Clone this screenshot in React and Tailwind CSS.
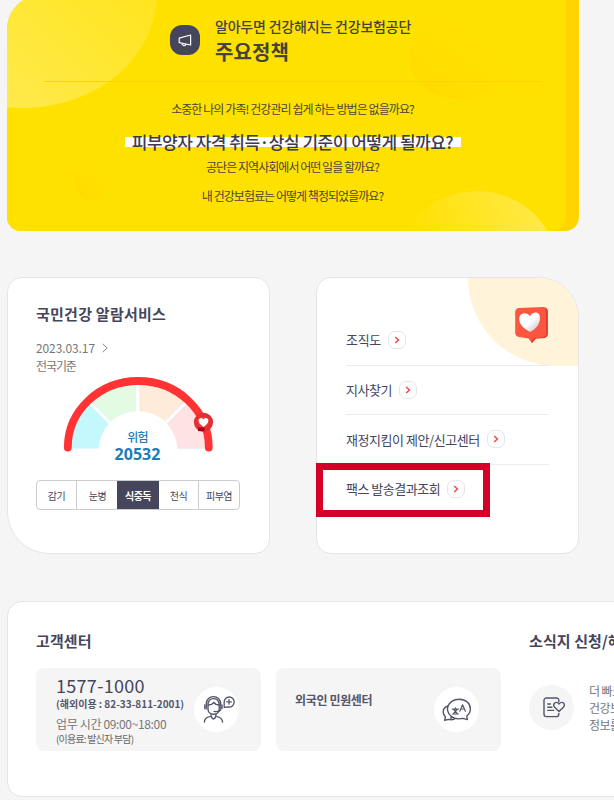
import React from "react";

const questionBase = "relative whitespace-nowrap text-[12px] leading-[16px] text-[#4a4636]";

function ArrowBadge() {
  return (
    <span className="flex h-[18px] w-[18px] items-center justify-center rounded-[7px] border border-[#e6e6e6] bg-white">
      <svg width="6" height="8" viewBox="0 0 6 8" fill="none" stroke="#f04a43" strokeWidth="1.5">
        <path d="M1.2 1 L4.4 4 L1.2 7" />
      </svg>
    </span>
  );
}

function Banner() {
  return (
    <section className="relative h-[231px] w-[572px] overflow-hidden rounded-b-[14px] bg-[#ffd400]">
      <svg className="absolute left-0 top-0" width="572" height="231" viewBox="0 0 572 231">
        <defs>
          <linearGradient id="glowA" x1="0.1" y1="1" x2="0.9" y2="0.3">
            <stop offset="0" stopColor="#fff" stopOpacity="0.36" />
            <stop offset="1" stopColor="#fff" stopOpacity="0.1" />
          </linearGradient>
          <linearGradient id="glowB" x1="0.9" y1="0.2" x2="0.15" y2="0.45">
            <stop offset="0" stopColor="#fff" stopOpacity="0.27" />
            <stop offset="1" stopColor="#fff" stopOpacity="0" />
          </linearGradient>
          <linearGradient id="shade" x1="0.2" y1="0.9" x2="0.75" y2="0.25">
            <stop offset="0" stopColor="#ffd400" stopOpacity="0.42" />
            <stop offset="0.9" stopColor="#ffd400" stopOpacity="0" />
          </linearGradient>
          <clipPath id="sheet">
            <path d="M0 30 A36 36 0 0 1 36 -6 H559 V217 A14 14 0 0 1 545 231 H0 Z" />
          </clipPath>
        </defs>
        <path d="M0 0 H17 Q0 10 0 31 Z" fill="#f5f5f5" />
        <g clipPath="url(#sheet)">
          <rect x="0" y="-6" width="559" height="237" fill="#ffe100" />
          <ellipse cx="16" cy="-6" rx="134" ry="114" fill="url(#glowA)" />
          <ellipse cx="451" cy="57" rx="49" ry="42" fill="url(#shade)" />
          <circle cx="86" cy="181" r="19" fill="url(#shade)" />
          <circle cx="470" cy="273" r="82" fill="url(#glowB)" />
        </g>
      </svg>
      <div className="relative flex h-full w-[559px] flex-col">
        <div className="flex h-[81px] items-start pl-[163px]">
          <div className="mt-[25px] flex h-[30px] w-[30px] items-center justify-center rounded-[12px] bg-[#45465b]">
            <svg width="14" height="13" viewBox="0 0 14 13" fill="none" stroke="#fff" strokeWidth="1.2" strokeLinejoin="round">
              <path d="M1.2 4.2 L12.6 1 V11 L1.2 8.6 Z M3.8 9.3 C4 12.3 7.6 12.4 8 10.2" />
            </svg>
          </div>
          <div className="ml-[15px] pt-[16px]">
            <div className="whitespace-nowrap text-[14px] font-medium leading-[20px] tracking-[-0.2px] text-[#45433f]">알아두면 건강해지는 건강보험공단</div>
            <div className="mt-[3px] text-[20px] font-bold leading-[26px] tracking-[0.1px] text-[#45433f]">주요정책</div>
          </div>
        </div>
        <div className="ml-[37px] h-px w-[498px] bg-[#fbd204]" />
        <div className="flex w-[571px] flex-col items-center pt-[19px]">
          <div className={questionBase + " tracking-[-0.92px]"}>소중한 나의 가족! 건강관리 쉽게 하는 방법은 없을까요?</div>
          <div className="mt-[13px] flex h-[24px] items-center">
            <div className="flex h-[10px] w-[336px] items-center justify-center bg-white">
              <span className="whitespace-nowrap text-[17px] font-medium leading-[24px] tracking-[-0.5px] text-[#3c3b4a]">피부양자 자격 취득·상실 기준이 어떻게 될까요?</span>
            </div>
          </div>
          <div className={questionBase + " mt-[5px] tracking-[-0.96px]"}>공단은 지역사회에서 어떤 일을 할까요?</div>
          <div className={questionBase + " mt-[13px] tracking-[-0.96px]"}>내 건강보험료는 어떻게 책정되었을까요?</div>
        </div>
      </div>
    </section>
  );
}

function Gauge() {
  return (
    <svg className="absolute left-[52px] top-[96px]" width="156" height="80" viewBox="60 374 156 80">
      <path d="M71 448.5 A67 67 0 0 1 205 448.5 Z" fill="#c5f8fc" />
      <path d="M137.7 448.5 L90.3 401.1 A67 67 0 0 1 137.7 381.5 Z" fill="#e3fae3" />
      <path d="M137.7 448.5 V381.5 A67 67 0 0 1 185.1 401.1 Z" fill="#ffebd9" />
      <path d="M137.7 448.5 L185.1 401.1 A67 67 0 0 1 205 448.5 Z" fill="#ffe2e3" />
      <path d="M137.7 451 V380 M137.7 450.5 L88 401 M137.7 450.5 L187.5 401" stroke="#fff" strokeWidth="3" />
      <circle cx="138" cy="450.5" r="39.5" fill="#fff" />
      <path d="M67.8 447.5 A70.5 66.5 0 0 1 208.8 447.5" fill="none" stroke="#ff3333" strokeWidth="7.8" strokeLinecap="round" />
      <circle cx="203.5" cy="422.3" r="7.6" fill="#e93b3b" stroke="#e12f33" strokeWidth="4" />
      <rect x="198" y="427.5" width="6.5" height="3.6" fill="#a90012" />
      <path d="M203.5 427 C200.4 424.8 198.6 423 198.6 420.6 C198.6 417.6 202.3 417.2 203.5 419.6 C204.7 417.2 208.4 417.6 208.4 420.6 C208.4 423 206.6 424.8 203.5 427 Z" fill="#fff" />
    </svg>
  );
}

function AlarmCard() {
  const tab = "flex items-center justify-center whitespace-nowrap text-[10px] tracking-[-0.5px]";
  return (
    <section className="relative h-[277px] w-[263px] rounded-[15px] rounded-bl-[42px] border border-[#e5e5e5] bg-white">
      <h2 className="ml-[28px] mt-[25px] whitespace-nowrap text-[15px] font-bold leading-[22px] tracking-[0.25px] text-[#45465b]">국민건강 알람서비스</h2>
      <div className="ml-[28px] mt-[14px] flex items-center text-[12px] leading-[18px] text-[#777]">
        <span className="tracking-[-0.1px]">2023.03.17</span>
        <svg className="ml-[7px]" width="6" height="10" viewBox="0 0 6 10" fill="none" stroke="#888" strokeWidth="1">
          <path d="M0.6 0.8 L5.2 5 L0.6 9.2" />
        </svg>
      </div>
      <div className="ml-[28px] text-[12px] leading-[18px] tracking-[-1.1px] text-[#777]">전국기준</div>
      <Gauge />
      <div className="relative mt-[53px] flex w-[259px] flex-col items-center text-[#1c7db8]">
        <span className="text-[12px] font-medium leading-[17px] tracking-[-0.8px]">위험</span>
        <span className="font-['Noto_Sans'] text-[16px] font-bold leading-[18px]">20532</span>
      </div>
      <div className="ml-[28px] mt-[17px] grid h-[30px] w-[204px] grid-cols-[40px_41px_41px_40px_1fr] overflow-hidden rounded-[4px] border border-[#ccc] text-[#45465b]">
        <div className={tab + " border-r border-[#ccc]"}>감기</div>
        <div className={tab}>눈병</div>
        <div className={tab + " -ml-px -my-px bg-[#45465b] font-bold text-white"}>식중독</div>
        <div className={tab + " border-r border-[#ccc]"}>천식</div>
        <div className={tab}>피부염</div>
      </div>
    </section>
  );
}

function LinkCard() {
  const row = "flex h-[49.6px] items-center gap-[7px] whitespace-nowrap text-[13px] text-[#45465b]";
  return (
    <section className="relative h-[277px] w-[263px] rounded-[15px] rounded-tr-[40px] border border-[#e5e5e5] bg-white">
      <div className="absolute right-0 top-0 h-[88px] w-[110px] rounded-bl-[88px] rounded-tr-[39px] bg-[#fff4d9]" />
      <svg className="absolute right-[29px] top-[28px]" width="35" height="38" viewBox="0 0 35 38">
        <defs>
          <linearGradient id="pearl" x1="0" y1="0" x2="1" y2="1">
            <stop offset="0.5" stopColor="#fff" />
            <stop offset="1" stopColor="#bdbdbd" />
          </linearGradient>
        </defs>
        <path d="M5 2 L29 1 Q33.5 1 33.8 5 V28 Q33.5 31.5 30 32 L22 32.5 L18 37 L14.5 32.5 L5 31 Q1.5 30.5 1.2 27 V6 Q1.5 2.3 5 2 Z" fill="#fb5640" />
        <path d="M31.5 2 Q33.6 3 33.8 5 V28 Q33.5 31.5 30 32 L22 32.5 L18 37 L17 35 L20 32 L29 31.3 Q32.3 30.5 32.3 27 Z" fill="#dc3d35" />
        <path d="M16 26 C9 22 5.2 18 5.2 13 C5.2 6.5 13 5.2 16 10.3 C18 5 26 5 26 12 C26 18 22 23 16 26 Z" fill="url(#pearl)" />
      </svg>
      <div className="relative ml-[29px] w-[203px] pt-[37px] [&>div+div]:border-t [&>div+div]:border-[#ececec]">
        <div className={row + " tracking-[-0.3px]"}>조직도<ArrowBadge /></div>
        <div className={row + " tracking-[-0.5px]"}>지사찾기<ArrowBadge /></div>
        <div className={row + " tracking-[-0.45px]"}>재정지킴이 제안/신고센터<ArrowBadge /></div>
        <div className={row + " tracking-[-0.5px]"}>팩스 발송결과조회<ArrowBadge /></div>
      </div>
      <div className="absolute -left-[1px] top-[185px] h-[54px] w-[174px] border-[7px] border-[#d50027]" />
    </section>
  );
}

function AgentIcon() {
  return (
    <svg className="ml-[5px] shrink-0" width="32" height="30" viewBox="0 0 32 30" fill="none" stroke="#54556b" strokeWidth="1.4" strokeLinecap="round" strokeLinejoin="round">
      <path d="M3.2 14 V9.5 C3.2 -1 17.8 -1 17.8 9.5 V14 M5 9 V14 C5 21 16.2 21 16.2 14 V9 C15 1.8 6 1.8 5 9" />
      <path d="M5.5 10 L8.5 9.4 L10.7 7.4 L13 9.4 L16 10 M1.8 10 V13.5 M19 10 V13.5 M17.6 15 Q16 17.2 11 16.4" />
      <path d="M8 19.3 Q8 23.5 10.5 24 Q13 23.5 13 19.3 M1.4 27 Q1.6 22.3 7 21.6 M14 21.6 Q19 22.3 19.6 27" />
      <path d="M21.2 12.3 V7 A5 5 0 1 1 26 12 Z M23.7 6.9 H28.3 M26 4.6 V9.2" strokeWidth="1.3" />
    </svg>
  );
}

function TranslateIcon() {
  return (
    <svg width="30" height="24" viewBox="0 0 30 24" fill="none" stroke="#54556b" strokeWidth="1.4" strokeLinecap="round" strokeLinejoin="round">
      <path d="M9 20.8 L9.2 18.3 Q4 13.5 6 8 Q9.5 1.2 17 1.2 C24 1.2 28.4 5.5 28.4 11 Q28.4 15 24.8 18 L25.4 21.6 L21 20.4 Q13 22 9.2 18.3" />
      <path d="M6 8 Q1 9.5 1.2 14 Q1.3 17 3.4 18.8 L2.6 22.3 L7 21.4 Q9.5 22.2 12.5 21" />
      <path d="M10.4 11.2 H16.4 M13.4 9.8 V11 M11.6 11.4 L15.4 15.6 M15.2 11.4 L11.4 15.6 M10.6 16 H16.2 M17.8 13.2 L20.6 6.8 L23.4 13.2 M19 11 H22.4" strokeWidth="1.2" />
    </svg>
  );
}

function LetterIcon() {
  return (
    <svg className="shrink-0" width="23" height="21" viewBox="0 0 23 21" fill="none" stroke="#54556b" strokeWidth="1.4" strokeLinecap="round" strokeLinejoin="round">
      <path d="M15.8 4.8 V3.5 Q15.8 1 13.4 1 H3.5 Q1 1 1 3.5 V17 Q1 19.6 3.5 19.6 H13.4 Q15.8 19.6 15.8 17.2 V16.5" />
      <path d="M4.8 7 H7.4 M4.8 10.2 H8.8 M4.8 13.4 H10.6" />
      <path d="M16 14.6 L11.6 10.2 Q9.7 7.8 11.7 6 Q14 4.4 16 7 Q18.2 4.4 20.5 6 Q22.3 7.8 20.4 10.2 Z" />
    </svg>
  );
}

function ServiceCenter() {
  const heading = "whitespace-nowrap text-[15px] font-bold leading-[22px] tracking-[0.1px] text-[#45465b]";
  return (
    <section className="flex h-[196px] w-[900px] rounded-[15px] border border-[#e5e5e5] bg-white pl-[28px] pt-[28px]">
      <div className="w-[493px]">
        <h2 className={heading}>고객센터</h2>
        <div className="mt-[16px] flex gap-[15px]">
          <div className="flex h-[83px] w-[225px] items-center justify-between rounded-[8px] bg-[#f5f5f5] pl-[20px] pr-[22px]">
            <div className="w-[130px] whitespace-nowrap">
              <div className="text-[18px] leading-[20px] tracking-[0.3px] text-[#45465b]">1577-1000</div>
              <div className="mt-[2px] text-[10px] font-bold leading-[14px] text-[#55566a]">(해외이용 : 82-33-811-2001)</div>
              <div className="mt-[5px] text-[12px] leading-[16px] tracking-[-0.35px] text-[#777]">업무 시간 09:00~18:00</div>
              <div className="text-[10px] leading-[13px] tracking-[-0.8px] text-[#666]">(이용료: 발신자 부담)</div>
            </div>
            <div className="flex h-[45px] w-[45px] shrink-0 items-center justify-center rounded-full bg-white">
              <AgentIcon />
            </div>
          </div>
          <div className="flex h-[83px] w-[225px] items-center justify-between rounded-[8px] bg-[#f5f5f5] pl-[19px] pr-[22px]">
            <div className="-mt-[20px] whitespace-nowrap text-[12px] font-bold leading-[16px] tracking-[-0.35px] text-[#55566a]">외국인 민원센터</div>
            <div className="flex h-[45px] w-[45px] shrink-0 items-center justify-center rounded-full bg-white">
              <TranslateIcon />
            </div>
          </div>
        </div>
      </div>
      <div className="w-[300px]">
        <h2 className={heading}>소식지 신청/해지</h2>
        <div className="mt-[30px] flex items-center gap-[15px]">
          <div className="flex h-[45px] w-[45px] shrink-0 items-center justify-center rounded-full bg-[#f5f5f5] pl-[6px]">
            <LetterIcon />
          </div>
          <p className="whitespace-nowrap text-[12px] leading-[17px] tracking-[-0.6px] text-[#777]">
            더 빠르고 편리하게<br />건강보험 소식과<br />정보를 받아보세요
          </p>
        </div>
      </div>
    </section>
  );
}

export default function App() {
  return (
    <main className="h-[800px] w-[614px] overflow-hidden bg-[#f5f5f5] pl-[7px] font-['Noto_Sans_CJK_KR','Noto_Sans',sans-serif]">
      <Banner />
      <div className="mt-[46px] flex gap-[46px]">
        <AlarmCard />
        <LinkCard />
      </div>
      <div className="mt-[47px]">
        <ServiceCenter />
      </div>
    </main>
  );
}
